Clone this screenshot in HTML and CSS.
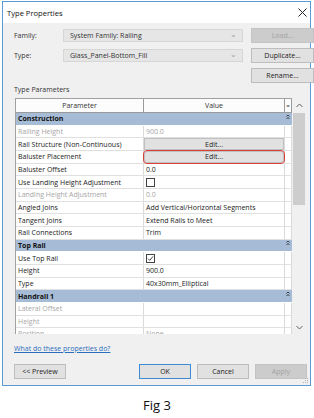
FILE: index.html
```html
<!DOCTYPE html>
<html lang="en">
<head>
    <meta charset="UTF-8">
    <meta name="viewport" content="width=device-width, initial-scale=1.0">
    <title>Type Properties</title>
    <link rel="stylesheet" href="styles.css">
</head>
<body>

    <!-- Dialog window -->
    <div class="dialog">
        <div class="titlebar">
            <span class="title">Type Properties</span>
            <svg class="close" width="9" height="9" viewBox="0 0 9 9">
                <path d="M0.5 0.5 L8.5 8.5 M8.5 0.5 L0.5 8.5" stroke="#222" stroke-width="1" fill="none"/>
            </svg>
        </div>

        <div class="content">
            <!-- Family / type selection -->
            <div class="type-form">
                <label class="form-label">Family:</label>
                <div class="combo"><span>System Family: Railing</span><span class="chev">&#8964;</span></div>
                <button class="btn disabled">Load...</button>

                <label class="form-label">Type:</label>
                <div class="combo"><span>Glass_Panel-Bottom_Fill</span><span class="chev">&#8964;</span></div>
                <button class="btn">Duplicate...</button>

                <span></span>
                <span></span>
                <button class="btn">Rename...</button>
            </div>

            <div class="section-label">Type Parameters</div>

            <!-- Property grid -->
            <div class="grid-wrap">
                <div class="prop-table">
                    <div class="prop-head">
                        <div class="head-cell">Parameter</div>
                        <div class="head-cell">Value</div>
                        <div class="head-cell eq">=</div>
                    </div>
                    <div class="prop-body">
                        <div class="group">Construction<svg class="fold" width="4" height="6" viewBox="0 0 4 6"><path d="M0.5 2.5 L2 1 L3.5 2.5 M0.5 5 L2 3.5 L3.5 5" stroke="#222" fill="none" stroke-width="0.8"/></svg></div>
                        <div class="row muted"><div class="cell">Railing Height</div><div class="cell">900.0</div></div>
                        <div class="row"><div class="cell">Rail Structure (Non-Continuous)</div><div class="cell btn-cell"><span class="edit-btn">Edit...</span></div></div>
                        <div class="row"><div class="cell">Baluster Placement</div><div class="cell btn-cell"><span class="edit-btn marked">Edit...</span></div></div>
                        <div class="row"><div class="cell">Baluster Offset</div><div class="cell">0.0</div></div>
                        <div class="row"><div class="cell">Use Landing Height Adjustment</div><div class="cell"><span class="check"></span></div></div>
                        <div class="row muted"><div class="cell">Landing Height Adjustment</div><div class="cell">0.0</div></div>
                        <div class="row"><div class="cell">Angled Joins</div><div class="cell">Add Vertical/Horizontal Segments</div></div>
                        <div class="row"><div class="cell">Tangent Joins</div><div class="cell">Extend Rails to Meet</div></div>
                        <div class="row"><div class="cell">Rail Connections</div><div class="cell">Trim</div></div>

                        <div class="group">Top Rail<svg class="fold" width="4" height="6" viewBox="0 0 4 6"><path d="M0.5 2.5 L2 1 L3.5 2.5 M0.5 5 L2 3.5 L3.5 5" stroke="#222" fill="none" stroke-width="0.8"/></svg></div>
                        <div class="row"><div class="cell">Use Top Rail</div><div class="cell"><span class="check"><svg width="7" height="7" viewBox="0 0 7 7"><path d="M1 3.6 L2.8 5.4 L6 1.4" stroke="#333" stroke-width="0.9" fill="none"/></svg></span></div></div>
                        <div class="row"><div class="cell">Height</div><div class="cell">900.0</div></div>
                        <div class="row"><div class="cell">Type</div><div class="cell">40x30mm_Elliptical</div></div>

                        <div class="group">Handrail 1<svg class="fold" width="4" height="6" viewBox="0 0 4 6"><path d="M0.5 2.5 L2 1 L3.5 2.5 M0.5 5 L2 3.5 L3.5 5" stroke="#222" fill="none" stroke-width="0.8"/></svg></div>
                        <div class="row muted"><div class="cell">Lateral Offset</div><div class="cell"></div></div>
                        <div class="row muted"><div class="cell">Height</div><div class="cell"></div></div>
                        <div class="row muted"><div class="cell">Position</div><div class="cell">None</div></div>
                    </div>
                </div>

                <!-- Scrollbar -->
                <div class="scrollbar">
                    <div class="arrow">
                        <svg width="7" height="5" viewBox="0 0 7 5"><path d="M0.5 4 L3.5 1 L6.5 4" stroke="#606060" fill="none" stroke-width="1"/></svg>
                    </div>
                    <div class="thumb"></div>
                    <div class="track"></div>
                    <div class="arrow">
                        <svg width="7" height="5" viewBox="0 0 7 5"><path d="M0.5 1 L3.5 4 L6.5 1" stroke="#606060" fill="none" stroke-width="1"/></svg>
                    </div>
                </div>
            </div>

            <a href="#" class="help-link">What do these properties do?</a>

            <!-- Dialog buttons -->
            <div class="button-row">
                <button class="btn">&lt;&lt; Preview</button>
                <div class="button-group">
                    <button class="btn default">OK</button>
                    <button class="btn">Cancel</button>
                    <button class="btn disabled">Apply</button>
                </div>
            </div>
        </div>

        <svg class="grip" width="6" height="6" viewBox="0 0 6 6">
            <rect x="4" y="0" width="1" height="1" fill="#b0b0b0"/>
            <rect x="2" y="2" width="1" height="1" fill="#b0b0b0"/>
            <rect x="4" y="2" width="1" height="1" fill="#b0b0b0"/>
            <rect x="0" y="4" width="1" height="1" fill="#b0b0b0"/>
            <rect x="2" y="4" width="1" height="1" fill="#b0b0b0"/>
            <rect x="4" y="4" width="1" height="1" fill="#b0b0b0"/>
        </svg>
    </div>

    <div class="caption">Fig 3</div>

</body>
</html>
```

FILE: styles.css
```css
body {
    margin: 0;
    background-color: #fff;
    font-family: "Open Sans", "Noto Sans", sans-serif;
    font-size: 7px;
    color: #222;
}

.dialog {
    position: relative;
    box-sizing: border-box;
    width: 309px;
    height: 385px;
    margin: 1px 0 0 2px;
    border: 1px solid #5b9bd5;
    background-color: #f0f0f0;
}

.titlebar {
    display: flex;
    justify-content: space-between;
    align-items: center;
    height: 21px;
    padding: 0 3px 0 4px;
    background-color: #fff;
}

.title {
    font-size: 7.6px;
    color: #111;
}

.content {
    padding: 5px 3px 0 11px;
}

.type-form {
    display: grid;
    grid-template-columns: 41px 180px 63px;
    grid-auto-rows: 15px;
    column-gap: 8px;
    row-gap: 5px;
}

.form-label {
    align-self: center;
    color: #333;
}

.combo {
    align-self: center;
    display: flex;
    justify-content: space-between;
    align-items: center;
    box-sizing: border-box;
    height: 13px;
    padding: 0 5px 0 6px;
    background-color: #e6e6e6;
    border: 1px solid #d6d6d6;
    color: #333;
}

.chev {
    color: #a0a0a0;
    font-size: 8px;
    line-height: 8px;
    margin-top: -4px;
}

.btn {
    box-sizing: border-box;
    height: 15px;
    width: 52px;
    padding: 0;
    font-family: inherit;
    font-size: 7px;
    color: #222;
    background-color: #e1e1e1;
    border: 1px solid #bdbdbd;
}

.type-form .btn {
    width: 63px;
}

.btn.disabled {
    background-color: #cccccc;
    border-color: #c4c4c4;
    color: #a2a2a2;
}

.btn.default {
    border-color: #3d8bd0;
}

.section-label {
    margin: 2px 0 3px 0;
    line-height: 10px;
    color: #333;
}

.grid-wrap {
    display: flex;
    width: 291px;
    height: 236px;
    margin-left: 1px;
    background-color: #fff;
}

.prop-table {
    box-sizing: border-box;
    width: 277px;
    border-left: 1px solid #a0a0a0;
    border-top: 1px solid #a0a0a0;
    overflow: hidden;
}

.prop-head {
    display: grid;
    grid-template-columns: 128px 141px 7px;
    height: 13px;
    border-bottom: 1px solid #9a9a9a;
    background-color: #fcfcfc;
}

.head-cell {
    display: flex;
    justify-content: center;
    align-items: center;
    border-right: 1px solid #9a9a9a;
    color: #333;
}

.head-cell.eq {
    font-size: 6px;
}

.group {
    display: flex;
    justify-content: space-between;
    align-items: center;
    box-sizing: border-box;
    height: 12.67px;
    padding: 0 2px;
    background-color: #a6bcd6;
    font-weight: bold;
    color: #111;
    border-bottom: 1px solid #fff;
}

.fold {
    margin-top: -4px;
}

.row {
    display: grid;
    grid-template-columns: 128px 141px 7px;
    box-sizing: border-box;
    height: 12.67px;
    border-bottom: 1px solid #e0e0e0;
}

.cell {
    display: flex;
    align-items: center;
    padding-left: 2px;
    border-right: 1px solid #dadada;
    white-space: nowrap;
}

.row::after {
    content: "";
    border-right: 1px solid #dadada;
}

.row.muted .cell {
    color: #a6a6a6;
}

.btn-cell {
    padding: 0;
}

.edit-btn {
    display: flex;
    justify-content: center;
    align-items: center;
    box-sizing: border-box;
    width: 100%;
    height: 100%;
    background-color: #e1e1e1;
    border: 1px solid #c0c0c0;
    color: #222;
}

.edit-btn.marked {
    outline: 1.5px solid #d9403a;
    outline-offset: 0.5px;
    border-radius: 3px;
}

.check {
    display: flex;
    justify-content: center;
    align-items: center;
    box-sizing: border-box;
    width: 9px;
    height: 9px;
    border: 1px solid #444;
    background-color: #fff;
}

.scrollbar {
    display: flex;
    flex-direction: column;
    width: 14px;
    background-color: #f0f0f0;
}

.arrow {
    display: flex;
    justify-content: center;
    align-items: center;
    height: 14px;
}

.thumb {
    height: 92px;
    margin: 1px 1px 0 1px;
    background-color: #cdcdcd;
}

.track {
    flex: 1;
}

.help-link {
    display: block;
    margin-top: 10px;
    line-height: 10px;
    color: #2a6ebd;
}

.button-row {
    display: flex;
    justify-content: space-between;
    margin-top: 10px;
}

.button-group {
    display: flex;
    gap: 6px;
}

.grip {
    position: absolute;
    right: 1px;
    bottom: 1px;
}

.caption {
    margin-top: 11px;
    text-align: center;
    font-size: 13px;
    line-height: 16px;
    color: #111;
}
```
